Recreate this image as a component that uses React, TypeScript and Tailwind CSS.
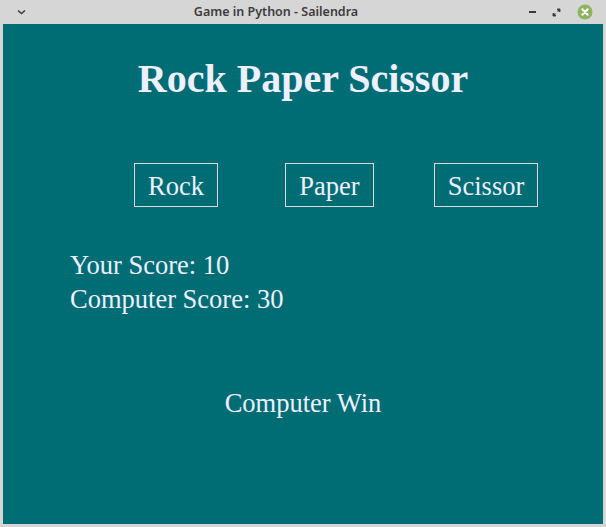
import { useState } from 'react'

const CHOICES = [
  { label: 'Rock', w: 'w-[84px]', ml: 'ml-0' },
  { label: 'Paper', w: 'w-[89px]', ml: 'ml-[67px]' },
  { label: 'Scissor', w: 'w-[104px]', ml: 'ml-[60px]' },
]

function TitleBar() {
  return (
    <div className="relative flex h-[24px] items-center bg-[#d6d6d6] font-['Noto_Sans',sans-serif] text-[12.5px] font-semibold text-[#3c3c3c]">
      <svg className="absolute left-[17px] top-[9px]" width="9" height="6" viewBox="0 0 9 6">
        <path d="M1 1.5 L4.5 4.5 L8 1.5" stroke="#3c3c3c" strokeWidth="1.6" fill="none" />
      </svg>
      <span className="w-full pr-[54px] text-center">Game in Python - Sailendra</span>
      <div className="absolute right-[13px] top-[4px] flex items-center gap-[16px]">
        <span className="block h-[2px] w-[7px] bg-[#3c3c3c]" />
        <svg width="9" height="9" viewBox="0 0 9 9">
          <path d="M5 1 H8 V4 Z M1 5 V8 H4 Z" fill="#3c3c3c" stroke="#3c3c3c" strokeWidth="0.8" />
          <path d="M8 1 L5.5 3.5 M1 8 L3.5 5.5" stroke="#3c3c3c" strokeWidth="1.4" />
        </svg>
        <svg width="16" height="16" viewBox="0 0 16 16">
          <circle cx="8" cy="8" r="7.5" fill="#8db361" />
          <path d="M5.3 5.3 L10.7 10.7 M10.7 5.3 L5.3 10.7" stroke="#fff" strokeWidth="2" strokeLinecap="round" />
        </svg>
      </div>
    </div>
  )
}

export default function App() {
  const [you] = useState(10)
  const [cpu] = useState(30)
  const [result] = useState('Computer Win')

  return (
    <div className="flex h-[527px] w-[606px] flex-col bg-[#d6d6d6]">
      <TitleBar />
      <div className="mx-[3px] mb-[3px] flex flex-1 flex-col bg-[#006d74] font-['Liberation_Serif',serif] text-[#eeefff]">
        <h1 className="mt-[32px] text-center text-[40px] leading-[46px] font-bold">Rock Paper Scissor</h1>
        <div className="mt-[61px] flex pl-[131px]">
          {CHOICES.map((c) => (
            <button
              key={c.label}
              className={`${c.ml} ${c.w} h-[44px] border border-[#d8d8d8] pt-[2px] text-center text-[26.5px] leading-[40px]`}
            >
              {c.label}
            </button>
          ))}
        </div>
        <div className="mt-[41px] pl-[67px] text-[26.5px] leading-[34px]">
          <p>Your Score: {you}</p>
          <p>Computer Score: {cpu}</p>
        </div>
        <p className="mt-[70px] text-center text-[26.5px] leading-[34px]">{result}</p>
      </div>
    </div>
  )
}
